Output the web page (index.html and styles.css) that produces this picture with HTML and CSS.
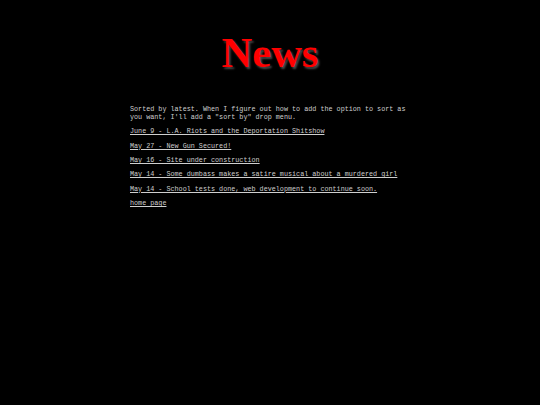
FILE: index.html
```html
<!DOCTYPE html>
<html lang="en">
<head>
    <meta charset="UTF-8">
    <meta name="viewport" content="width=device-width, initial-scale=1.0">
    <title>News</title>
    <link rel="stylesheet" href="styles.css">
</head>
<body>
    <h1 class="title">News</h1>
    <div class="news">
        <p>Sorted by latest. When I figure out how to add the option to sort as you want, I'll add a "sort by" drop menu.</p>
        <p><a href="#">June 9 - L.A. Riots and the Deportation Shitshow</a></p>
        <p><a href="#">May 27 - New Gun Secured!</a></p>
        <p><a href="#">May 16 - Site under construction</a></p>
        <p><a href="#">May 14 - Some dumbass makes a satire musical about a murdered girl</a></p>
        <p><a href="#">May 14 - School tests done, web development to continue soon.</a></p>
        <p><a href="#">home page</a></p>
    </div>
</body>
</html>
```
FILE: styles.css
```css
body {
    background-color: black;
    color: #cfcfcf;
    margin: 0;
    font-family: "Liberation Mono", "Courier New", monospace;
    font-size: 6.75px;
    -webkit-font-smoothing: antialiased;
}
.title {
    font-family: "Liberation Serif", "Times New Roman", serif;
    font-size: 42.5px;
    font-weight: bold;
    color: red;
    text-align: center;
    text-shadow: 2px 2px 2px #4a4a4a;
    margin: 28px 0 29px 0;
}
.news {
    width: 280px;
    margin: 0 auto;
}
.news p {
    line-height: 7.8px;
    margin: 0 0 6.6px 0;
}
.news a {
    color: #cfcfcf;
}
```
